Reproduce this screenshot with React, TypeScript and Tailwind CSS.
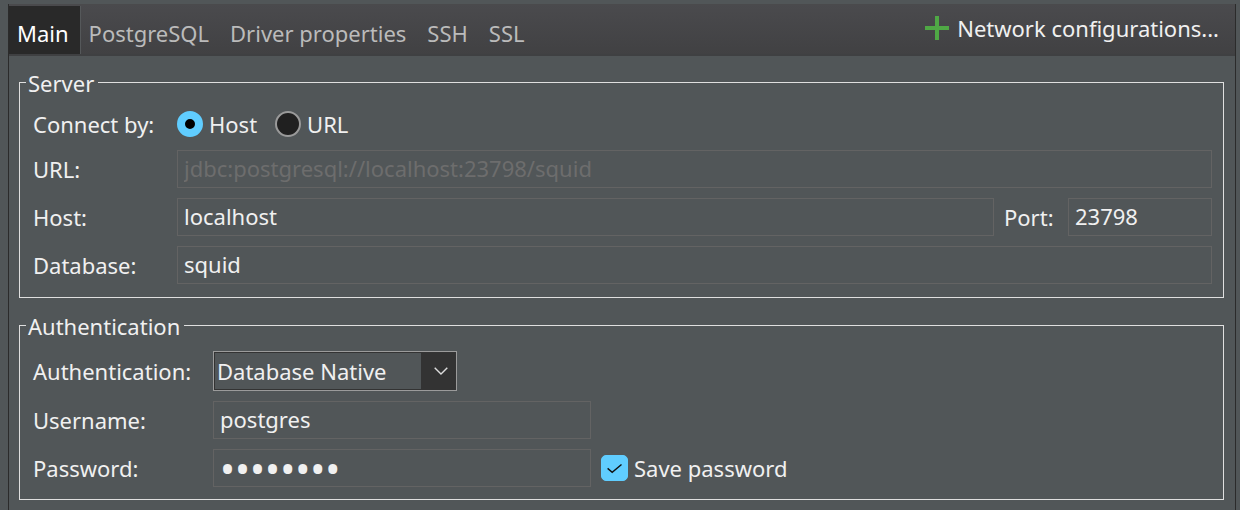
import { useState } from "react";

const TABS = ["Main", "PostgreSQL", "Driver properties", "SSH", "SSL"];

const FIELD =
  "h-[38px] min-w-0 border border-[#636363] bg-transparent px-1.5 text-[#f0f0f0] outline-none disabled:text-[#6d6d6d]";
const GROUP = "mr-[11px] ml-2.5 min-w-0 border border-[#dfdfdf]";
const LEGEND = "ml-1.5 pt-0.5 pr-1 pl-0.5 leading-[26px]";
const RADIO =
  "size-[26px] appearance-none rounded-full border-2 border-[#9a9a9a] bg-[#202020] checked:border-8 checked:border-[#60cdff] checked:bg-black";

export default function App() {
  const [tab, setTab] = useState("Main");
  const [mode, setMode] = useState("host");

  return (
    <div className="flex min-h-screen flex-col bg-[#515658] pt-1 pr-1 pl-2 font-['Noto_Sans',sans-serif] text-[22px] leading-[30px] text-[#f0f0f0]">
      <main className="flex grow flex-col border-x border-l-[#2b2b2b] border-r-[#2b2b2b]">
        <header className="flex h-[52px] items-stretch justify-between border-t border-b-2 border-t-[#4a4a4c] border-b-[#3f4042] bg-linear-to-b from-[#4a4a4d] to-[#414143]">
          <nav className="flex pt-px" role="tablist">
            {TABS.map((name) => (
              <button
                key={name}
                type="button"
                role="tab"
                aria-selected={tab === name}
                onClick={() => setTab(name)}
                className="border-r border-transparent pt-1.5 pr-3 pl-2 whitespace-nowrap text-[#bbbbbb] aria-selected:border-[#55585a] aria-selected:bg-[#292929] aria-selected:pr-[11px] aria-selected:text-white"
              >
                {name}
              </button>
            ))}
          </nav>
          <button type="button" className="flex items-center gap-2 pr-4 pb-1 whitespace-nowrap">
            <svg width="24" height="24" viewBox="0 0 24 24" fill="#4fa845" aria-hidden="true">
              <path d="M10 0h4v10h10v4H14v10h-4V14H0v-4h10z" />
            </svg>
            <span>Network configurations...</span>
          </button>
        </header>

        <form className="flex flex-col gap-[13px] pt-3">
          <fieldset className={GROUP}>
            <legend className={LEGEND}>Server</legend>
            <div className="grid grid-cols-[144px_minmax(0,1fr)] items-center gap-y-2.5 pt-3 pr-[11px] pb-[13px] pl-[13px]">
              <span id="connect-by">Connect by:</span>
              <div role="radiogroup" aria-labelledby="connect-by" className="flex h-8 items-center gap-[18px]">
                <label className="flex items-center gap-1.5">
                  <input type="radio" name="mode" checked={mode === "host"} onChange={() => setMode("host")} className={RADIO} />
                  <span>Host</span>
                </label>
                <label className="flex items-center gap-1.5">
                  <input type="radio" name="mode" checked={mode === "url"} onChange={() => setMode("url")} className={RADIO} />
                  <span>URL</span>
                </label>
              </div>

              <label htmlFor="url">URL:</label>
              <input id="url" type="text" disabled={mode === "host"} defaultValue="jdbc:postgresql://localhost:23798/squid" className={`${FIELD} pb-0.5`} />

              <label htmlFor="host">Host:</label>
              <div className="flex items-center">
                <input id="host" type="text" defaultValue="localhost" className={`${FIELD} grow pb-0.5`} />
                <label htmlFor="port" className="w-[74px] shrink-0 pl-2.5">Port:</label>
                <input id="port" type="text" defaultValue="23798" className={`${FIELD} w-36 pb-0.5`} />
              </div>

              <label htmlFor="database">Database:</label>
              <input id="database" type="text" defaultValue="squid" className={`${FIELD} pb-0.5`} />
            </div>
          </fieldset>

          <fieldset className={GROUP}>
            <legend className={LEGEND}>Authentication</legend>
            <div className="grid grid-cols-[180px_minmax(0,1fr)] items-center gap-y-2.5 pt-3 pr-[11px] pb-3 pl-[13px]">
              <label htmlFor="auth">Authentication:</label>
              <div className="relative h-10 w-[244px]">
                <select id="auth" className="h-10 w-full appearance-none border border-[#9b9b9b] bg-[#515658] pr-9 pl-[3px] text-[#f0f0f0] inset-ring inset-ring-[#333333] outline-none">
                  <option>Database Native</option>
                </select>
                <span className="pointer-events-none absolute inset-y-px right-px flex w-[35px] items-center justify-center bg-[#333333] pl-1">
                  <svg width="14" height="8" viewBox="0 0 14 8" fill="none" stroke="#dddddd" strokeWidth="1.4" aria-hidden="true">
                    <path d="M.7.8 7 7 13.3.8" />
                  </svg>
                </span>
              </div>

              <label htmlFor="username">Username:</label>
              <input id="username" type="text" defaultValue="postgres" className={`${FIELD} w-[378px] pb-0.5`} />

              <label htmlFor="password">Password:</label>
              <div className="flex items-center gap-2.5">
                <input id="password" type="password" defaultValue="postgres" className={`${FIELD} w-[378px] text-[40px] leading-9`} />
                <label className="flex items-center gap-1.5 whitespace-nowrap">
                  <span className="relative flex h-[26px] w-[27px]">
                    <input type="checkbox" defaultChecked className="peer size-full appearance-none rounded-[5px] border border-[#9a9a9a] bg-[#202020] checked:border-[#60cdff] checked:bg-[#60cdff]" />
                    <svg className="pointer-events-none absolute inset-0 hidden peer-checked:block" width="27" height="26" viewBox="0 0 27 26" fill="none" stroke="#101010" strokeWidth="1.4" aria-hidden="true">
                      <path d="m6.6 13.4 4.6 4 9.3-7.9" />
                    </svg>
                  </span>
                  <span>Save password</span>
                </label>
              </div>
            </div>
          </fieldset>
        </form>
      </main>
    </div>
  );
}
